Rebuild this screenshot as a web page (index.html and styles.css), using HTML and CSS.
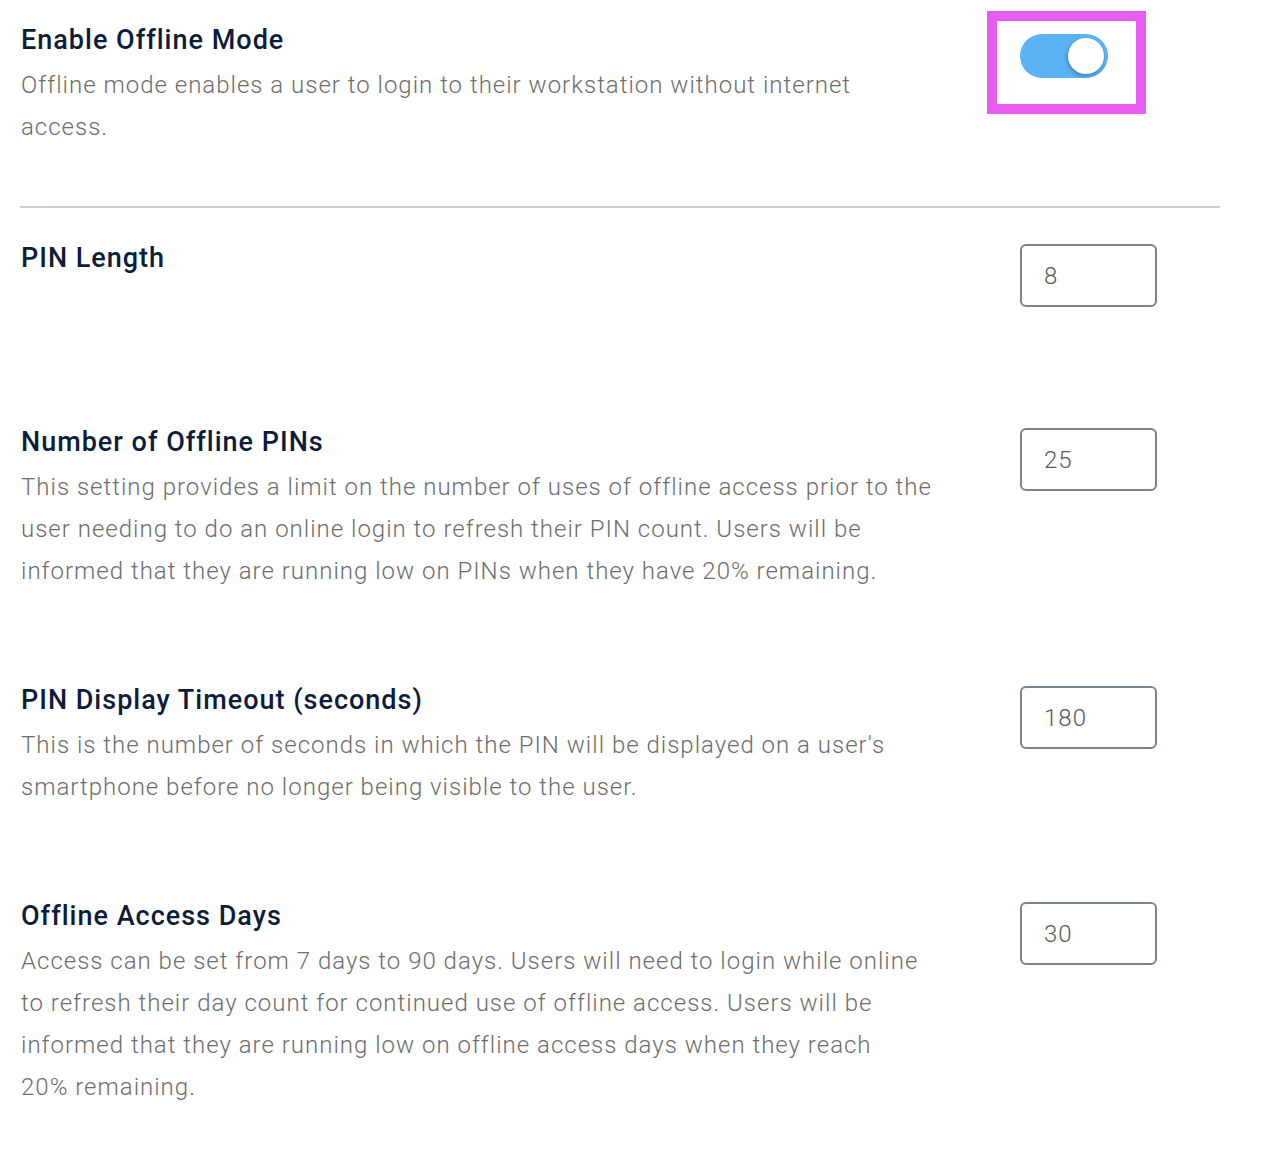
FILE: index.html
```html
<!DOCTYPE html>
<html lang="en">
<head>
<meta charset="utf-8">
<title>Offline Mode Settings</title>
<link rel="stylesheet" href="styles.css">
</head>
<body>
<main class="settings">
  <section class="setting setting--first">
    <div class="setting__info">
      <h2 class="setting__title">Enable Offline Mode</h2>
      <p class="setting__desc">Offline mode enables a user to login to their workstation without internet access.</p>
    </div>
    <div class="setting__control">
      <div class="highlight">
        <span class="toggle" role="switch" aria-checked="true"><span class="toggle__knob"></span></span>
      </div>
    </div>
  </section>

  <hr class="divider">

  <section class="setting">
    <div class="setting__info">
      <h2 class="setting__title">PIN Length</h2>
    </div>
    <div class="setting__control">
      <input class="setting__input" type="text" value="8">
    </div>
  </section>

  <section class="setting">
    <div class="setting__info">
      <h2 class="setting__title">Number of Offline PINs</h2>
      <p class="setting__desc">This setting provides a limit on the number of uses of offline access prior to the user needing to do an online login to refresh their PIN count. Users will be informed that they are running low on PINs when they have 20% remaining.</p>
    </div>
    <div class="setting__control">
      <input class="setting__input" type="text" value="25">
    </div>
  </section>

  <section class="setting">
    <div class="setting__info">
      <h2 class="setting__title">PIN Display Timeout (seconds)</h2>
      <p class="setting__desc">This is the number of seconds in which the PIN will be displayed on a user's smartphone before no longer being visible to the user.</p>
    </div>
    <div class="setting__control">
      <input class="setting__input" type="text" value="180">
    </div>
  </section>

  <section class="setting">
    <div class="setting__info">
      <h2 class="setting__title">Offline Access Days</h2>
      <p class="setting__desc setting__desc--narrow">Access can be set from 7 days to 90 days. Users will need to login while online to refresh their day count for continued use of offline access. Users will be informed that they are running low on offline access days when they reach 20% remaining.</p>
    </div>
    <div class="setting__control">
      <input class="setting__input" type="text" value="30">
    </div>
  </section>
</main>
</body>
</html>
```

FILE: styles.css
```css
* {
  box-sizing: border-box;
}

html, body {
  margin: 0;
  padding: 0;
  background: #ffffff;
}

body {
  font-family: Roboto, "Liberation Sans", sans-serif;
}

.settings {
  width: 1240px;
  padding: 22px 20px 0 20px;
}

.setting {
  display: grid;
  grid-template-columns: 1000px 137px;
  align-items: start;
  min-height: 94px;
  margin-bottom: 90px;
}

.setting--first {
  margin-bottom: 0;
}

.setting__title {
  margin: 0;
  font-size: 27px;
  line-height: 36px;
  font-weight: 500;
  letter-spacing: 1px;
  color: #0c1c3b;
  padding-left: 1px;
}

.setting__desc {
  max-width: 912px;
  margin: 6px 0 0 0;
  font-size: 24px;
  line-height: 42px;
  font-weight: 300;
  letter-spacing: 1px;
  color: #6d6d6d;
  padding-left: 1px;
}

.setting__desc--narrow {
  max-width: 900px;
}

.setting__control {
  padding-top: 4px;
}

.setting__input {
  display: block;
  width: 137px;
  height: 63px;
  border: 2px solid #7b8291;
  border-radius: 6px;
  padding: 0 0 0 22px;
  font-family: Roboto, "Liberation Sans", sans-serif;
  font-size: 24px;
  font-weight: 300;
  letter-spacing: 1px;
  color: #5a5a5a;
  background: #ffffff;
  outline: none;
}

.setting--first .setting__control {
  padding-top: 0;
}

.highlight {
  width: 159px;
  margin: -11px 0 0 -33px;
  border: 10px solid #e85cf4;
  padding: 13px 28px 26px 23px;
  background: #ffffff;
}

.toggle {
  display: flex;
  justify-content: flex-end;
  align-items: center;
  width: 88px;
  height: 44px;
  padding: 4px;
  border-radius: 22px;
  background: #5bb3f6;
}

.toggle__knob {
  display: block;
  width: 36px;
  height: 36px;
  border-radius: 50%;
  background: #ffffff;
  box-shadow: -1px 2px 4px rgba(0, 0, 0, 0.28);
}

.divider {
  margin: 58px 0 32px 0;
  height: 2px;
  border: 0;
  background: #c9cdd6;
}
```
